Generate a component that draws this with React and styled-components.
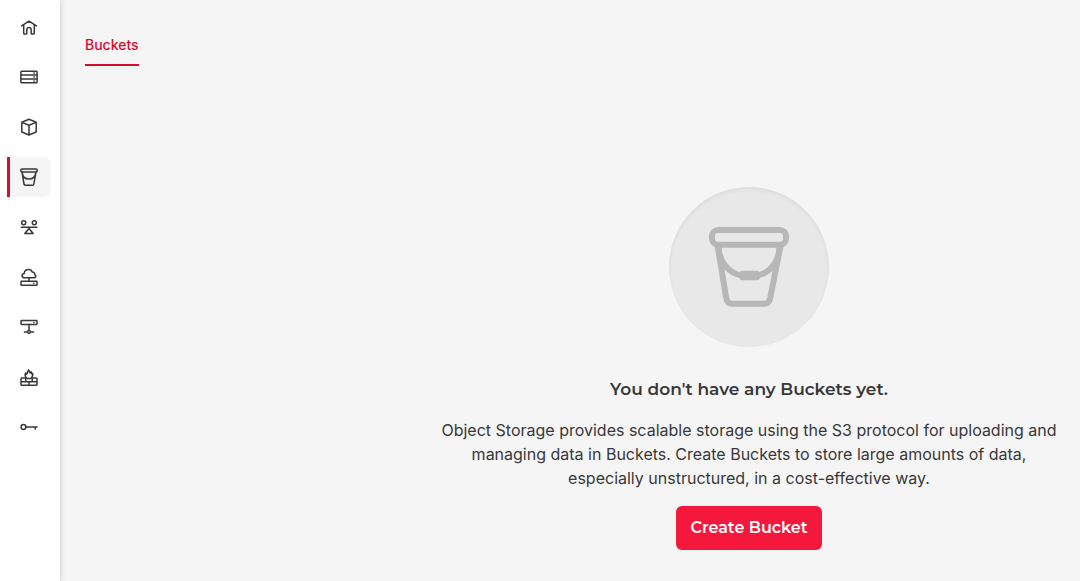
import React from "react";
import styled, { createGlobalStyle, css } from "styled-components";

const GlobalStyle = createGlobalStyle`
  *, *::before, *::after { box-sizing: border-box; }
  body {
    margin: 0;
    background: #f5f5f5;
    color: #383838;
    font-family: Inter, "Liberation Sans", sans-serif;
    font-size: 16px;
    line-height: 24px;
  }
`;

const Page = styled.div`
  display: flex;
  min-height: 100vh;
`;

const Sidebar = styled.nav`
  flex: none;
  width: 60px;
  padding: 7px 10px 7px 7px;
  display: flex;
  flex-direction: column;
  gap: 10px;
  background: #fff;
  box-shadow: 0 0 6px rgba(0, 0, 0, 0.2);
`;

const NavLink = styled.a`
  display: flex;
  align-items: center;
  justify-content: center;
  height: 40px;
  padding-right: 2px;
  border-left: 3px solid transparent;
  border-radius: 0 6px 6px 0;
  color: #383838;
  ${(p) =>
    p.$active &&
    css`
      background: #f5f5f5;
      border-left-color: #d50c2d;
    `}
`;

const LineIcon = styled.svg`
  width: 20px;
  height: 20px;
  fill: none;
  stroke: currentColor;
  stroke-width: 1.5;
  stroke-linecap: round;
  stroke-linejoin: round;
`;

const Main = styled.main`
  flex: 1;
  min-width: 0;
  padding: 24px 21px 24px 25px;
  display: flex;
  flex-direction: column;
`;

const Tabs = styled.div`
  display: flex;
`;

const Tab = styled.a`
  padding: 10px 0 8px;
  border-bottom: 2px solid #d50c2d;
  color: #d50c2d;
  font-size: 14px;
  font-weight: 500;
  line-height: 22px;
  text-decoration: none;
`;

const EmptyState = styled.section`
  width: 100%;
  max-width: 620px;
  margin: 121px 0 0 auto;
  display: flex;
  flex-direction: column;
  align-items: center;
  text-align: center;
`;

const Badge = styled.div`
  width: 160px;
  height: 160px;
  display: flex;
  align-items: center;
  justify-content: center;
  border-radius: 50%;
  background: #e8e8e8;
  color: #b7b7b7;
  box-shadow: inset 0 2px 4px rgba(0, 0, 0, 0.06);
`;

const BucketArt = styled.svg`
  width: 80px;
  height: 80px;
  fill: none;
  stroke: currentColor;
  stroke-width: 6;
  stroke-linejoin: round;
`;

const Title = styled.h1`
  margin: 30px 0 17px;
  font-family: Montserrat, Inter, sans-serif;
  font-size: 17px;
  font-weight: 600;
  line-height: 24px;
`;

const Description = styled.p`
  margin: 0;
`;

const PrimaryButton = styled.button`
  height: 44px;
  margin-top: 16px;
  padding: 0 14px;
  border: 0;
  border-radius: 6px;
  background: #f4183c;
  color: #fff;
  font-family: Montserrat, Inter, sans-serif;
  font-size: 16px;
  font-weight: 600;
  line-height: 24px;
  cursor: pointer;
`;

const drawings = {
  home: (
    <path d="M2.6 8.9 10 4.2l7.4 4.7M4.7 8V16.2q0 .8.8.8h1.5q.8 0 .8-.8V12.6a2.2 2.2 0 0 1 4.4 0v3.6q0 .8.8.8h1.5q.8 0 .8-.8V8" />
  ),
  servers: (
    <>
      <rect x="1.9" y="4.2" width="16.2" height="11.6" rx=".8" />
      <path d="M2 8h16M2 12h16M14.9 6.1h.4M14.9 10h.4M14.9 14h.4" />
    </>
  ),
  volumes: (
    <path d="M10 2.3 17.2 5.2V15L10 18 2.8 15V5.2ZM3 5.4 10 8.3l7-2.9M10 8.3V18" />
  ),
  buckets: (
    <>
      <rect x="1.8" y="2.1" width="16.4" height="2.8" rx="1.2" />
      <path d="M3 5.2 5 17q.2 1.2 1.3 1.2h7.2q1.1 0 1.3-1.2L17 5.2M3.2 5.6C3.6 9.6 6.4 12 10 12s6.4-2.4 6.8-6.4" />
    </>
  ),
  balancer: (
    <>
      <circle cx="4.7" cy="5.7" r="2" />
      <circle cx="15.3" cy="5.7" r="2" />
      <path d="M2.3 10.2h15.6M10 11.4 14.2 16.5H5.8Z" />
    </>
  ),
  floating: (
    <>
      <path d="M5.8 10.8C2.4 10.8 2.2 7.2 5.2 6.6 5.4 1.7 12 1 13.2 5c2.2.1 2.8 1.4 2.4 2.6 2 .8 1.6 3.2-.9 3.2ZM10 11v3" />
      <rect x="2" y="14.3" width="16" height="4" rx=".5" />
      <path d="M14.6 16.3h.2" />
    </>
  ),
  network: (
    <>
      <rect x="2" y="3.6" width="16" height="3.8" rx=".6" />
      <path d="M14.8 5.5h.2M10 7.6v6M5.4 15h3M11.6 15h3" />
      <circle cx="10" cy="15" r="1.4" />
    </>
  ),
  firewall: (
    <>
      <path d="M2.8 11h4M13.2 11h4q.8 0 .8.8v5.7q0 .8-.8.8H2.8q-.8 0-.8-.8v-5.7q0-.8.8-.8M2 14.7h16M6.8 11v3.7M13.2 11v3.7M10 14.7v3.6" />
      <path d="M8.2 11.4C5.7 10 6 7.7 6.5 6l1.3 1.1L9.5 2.9l1.6 3 1.1-1.1.4 2 1.1-.2c.2 2-.2 3.8-1.9 4.8Z" />
    </>
  ),
  security: (
    <>
      <circle cx="4.5" cy="10" r="2.4" />
      <path d="M7.1 10h11M16.3 10v2" />
    </>
  ),
};

const sections = [
  { id: "home", label: "Overview" },
  { id: "servers", label: "Servers" },
  { id: "volumes", label: "Volumes" },
  { id: "buckets", label: "Object Storage", active: true },
  { id: "balancer", label: "Load Balancers" },
  { id: "floating", label: "Floating IPs" },
  { id: "network", label: "Networks" },
  { id: "firewall", label: "Firewalls" },
  { id: "security", label: "Security" },
];

export default function App() {
  return (
    <>
      <GlobalStyle />
      <Page>
        <Sidebar aria-label="Project">
          {sections.map(({ id, label, active }) => (
            <NavLink
              key={id}
              href={`#${id}`}
              aria-label={label}
              aria-current={active ? "page" : undefined}
              $active={active}
            >
              <LineIcon viewBox="0 0 20 20" aria-hidden="true">
                {drawings[id]}
              </LineIcon>
            </NavLink>
          ))}
        </Sidebar>
        <Main>
          <Tabs>
            <Tab href="#buckets" aria-current="page">Buckets</Tab>
          </Tabs>
          <EmptyState>
            <Badge>
              <BucketArt viewBox="0 0 80 80" aria-hidden="true">
                <rect x="3" y="3" width="74" height="14.7" rx="6" />
                <path d="M8.7 19 17.2 71Q18.2 76.7 23 76.7H56Q60 76.7 61.2 71L71.5 19" />
                <path d="M9.5 20C10 34 19 46 33 48.5M70.5 20C70 34 62 46 48 48.5" />
                <rect x="30.3" y="43.8" width="20.7" height="9.4" rx="3.5" fill="currentColor" stroke="none" />
              </BucketArt>
            </Badge>
            <Title>You don't have any Buckets yet.</Title>
            <Description>
              Object Storage provides scalable storage using the S3 protocol for
              uploading and managing data in Buckets. Create Buckets to store
              large amounts of data, especially unstructured, in a
              cost-effective way.
            </Description>
            <PrimaryButton type="button">Create Bucket</PrimaryButton>
          </EmptyState>
        </Main>
      </Page>
    </>
  );
}
